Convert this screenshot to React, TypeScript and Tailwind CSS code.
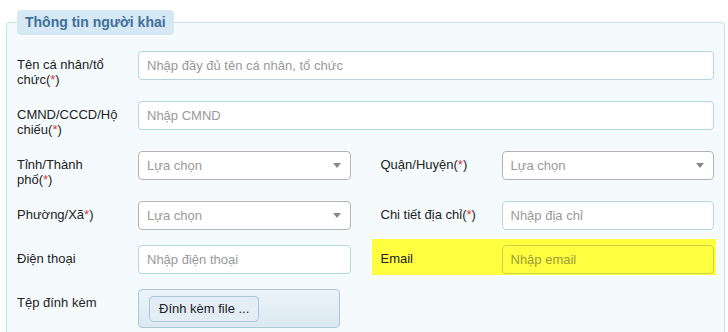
import type { ReactNode } from "react";

function Req() {
  return <span className="text-[#e0383e]">*</span>;
}

function Label({ children }: { children: ReactNode }) {
  return (
    <div className="-mb-[1px] w-[121px] shrink-0 whitespace-nowrap pr-[4px] pt-[6px] leading-[15px] text-[#222]">
      {children}
    </div>
  );
}

function TextInput({ placeholder }: { placeholder: string }) {
  return (
    <input
      placeholder={placeholder}
      className="h-[29px] w-full min-w-0 rounded-[4px] border border-[#b5d5de] bg-white px-[8px] text-[13px] text-[#222] outline-none placeholder:text-[#999]"
    />
  );
}

function SelectBox() {
  return (
    <div className="flex h-[29px] w-full items-center justify-between rounded-[4px] border border-[#b4b4b4] bg-white pl-[8px] pr-[9px]">
      <span className="text-[#999]">Lựa chọn</span>
      <svg width="8" height="5" viewBox="0 0 8 5">
        <path d="M0 0h8L4 5z" fill="#888" />
      </svg>
    </div>
  );
}

function Row({ label, children }: { label: ReactNode; children: ReactNode }) {
  return (
    <div className="flex min-w-0">
      <Label>{label}</Label>
      <div className="min-w-0 flex-1">{children}</div>
    </div>
  );
}

export default function App() {
  return (
    <div className="min-h-screen bg-white pl-[6px] pr-[3px] pt-[10px] font-['Liberation_Sans',Arial,sans-serif] text-[13px]">
      <fieldset className="rounded-[4px] border border-[#c4e2e9] bg-[#f5fbfd] px-[10px] pb-[20px] pt-[16px]">
        <legend className="h-[25px] rounded-[4px] bg-[#d6e8f4] px-[8px] text-[14px] font-bold leading-[25px] text-[#3f6f9b]">
          Thông tin người khai
        </legend>

        <div className="flex flex-col gap-y-[15px]">
          <Row
            label={
              <>
                Tên cá nhân/tổ
                <br />
                chức(<Req />)
              </>
            }
          >
            <TextInput placeholder="Nhập đầy đủ tên cá nhân, tổ chức" />
          </Row>

          <Row
            label={
              <>
                CMND/CCCD/Hộ
                <br />
                chiếu(<Req />)
              </>
            }
          >
            <TextInput placeholder="Nhập CMND" />
          </Row>

          <div className="grid grid-cols-2 gap-x-[30px]">
            <Row
              label={
                <>
                  Tỉnh/Thành
                  <br />
                  phố(<Req />)
                </>
              }
            >
              <SelectBox />
            </Row>
            <Row
              label={
                <>
                  Quận/Huyện(<Req />)
                </>
              }
            >
              <SelectBox />
            </Row>
          </div>

          <div className="grid grid-cols-2 gap-x-[30px]">
            <Row
              label={
                <>
                  Phường/Xã<Req />)
                </>
              }
            >
              <SelectBox />
            </Row>
            <Row
              label={
                <>
                  Chi tiết địa chỉ(<Req />)
                </>
              }
            >
              <TextInput placeholder="Nhập địa chỉ" />
            </Row>
          </div>

          <div className="grid grid-cols-2 gap-x-[30px]">
            <Row label="Điện thoại">
              <TextInput placeholder="Nhập điện thoại" />
            </Row>
            <div className="-mb-[1px] -ml-[9px] -mr-[2px] -mt-[6px] bg-[#ffff40] pb-[1px] pl-[9px] pr-[2px] pt-[6px]">
              <Row label="Email">
                <input
                  placeholder="Nhập email"
                  className="h-[29px] w-full min-w-0 rounded-[4px] border border-[#c6d44a] bg-[#ffff40] px-[8px] text-[13px] outline-none placeholder:text-[#9c9c3a]"
                />
              </Row>
            </div>
          </div>

          <Row label="Tệp đính kèm">
            <div className="h-[39px] w-[202px] rounded-[4px] border border-[#a9c8d7] bg-gradient-to-b from-[#eaf3f9] to-[#dce9f1] pl-[10px] pt-[6px]">
              <button className="h-[26px] rounded-[4px] border border-[#a8c6d6] bg-[#e2edf5] px-[9px] text-[13px] text-[#222]">
                Đính kèm file ...
              </button>
            </div>
          </Row>
        </div>
      </fieldset>
    </div>
  );
}
